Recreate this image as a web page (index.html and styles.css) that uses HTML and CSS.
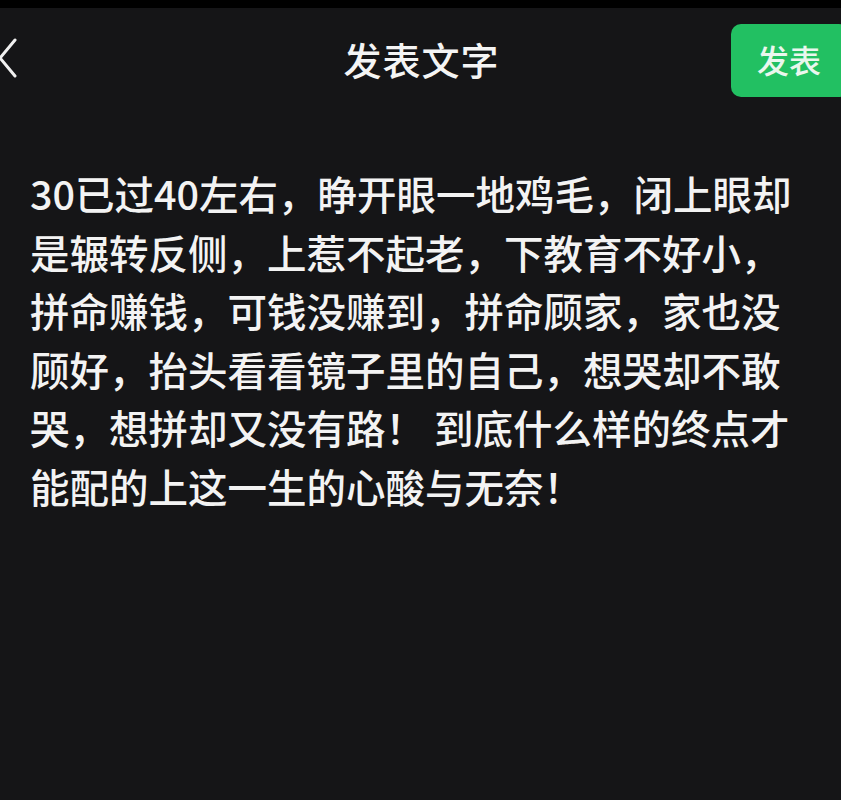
FILE: index.html
```html
<!DOCTYPE html>
<html lang="zh-CN">
<head>
  <meta charset="UTF-8">
  <meta name="viewport" content="width=device-width, initial-scale=1">
  <title>发表文字</title>
  <link rel="stylesheet" href="styles.css">
</head>
<body>
  <div class="status-strip"></div>

  <header class="header">
    <div class="back">
      <svg width="14" height="40" viewBox="-4 0 14 40" aria-hidden="true">
        <polyline points="11,2 -4,20 11,38" fill="none" stroke="#f0f0f0" stroke-width="3" stroke-linecap="round" stroke-linejoin="round"/>
      </svg>
    </div>
    <h1 class="title">发表文字</h1>
    <div class="actions">
      <button class="btn-publish">发表</button>
    </div>
  </header>

  <main class="content">
    <p class="post-text">30已过40左右，睁开眼一地鸡毛，闭上眼却是辗转反侧，上惹不起老，下教育不好小，拼命赚钱，可钱没赚到，拼命顾家，家也没顾好，抬头看看镜子里的自己，想哭却不敢哭，想拼却又没有路！ 到底什么样的终点才能配的上这一生的心酸与无奈！</p>
  </main>
</body>
</html>
```

FILE: styles.css
```css
html, body {
  margin: 0;
  padding: 0;
}

body {
  font-family: "Noto Sans CJK SC", "Noto Sans", sans-serif;
  background: #151517;
  color: #f2f2f2;
  min-height: 800px;
  overflow: hidden;
}

.status-strip {
  height: 8px;
  background: #000;
}

.header {
  display: grid;
  grid-template-columns: 1fr auto 1fr;
  align-items: center;
  height: 100px;
}

.back {
  display: flex;
  align-items: center;
}

.back svg {
  display: block;
  overflow: visible;
}

.title {
  margin: 0;
  font-size: 38px;
  font-weight: 500;
  letter-spacing: 1px;
  color: #f4f4f4;
  padding-left: 2px;
}

.actions {
  display: flex;
  justify-content: flex-end;
  overflow: hidden;
}

.btn-publish {
  width: 118px;
  height: 73px;
  margin: 5px -8px 0 0;
  padding: 0 0 4px 26px;
  border: none;
  border-radius: 10px;
  background: #22c062;
  color: #eaf7ee;
  font-family: inherit;
  font-size: 32px;
  font-weight: 500;
  text-align: left;
  cursor: pointer;
}

.content {
  padding: 56px 41px 0 30px;
}

.post-text {
  margin: 0;
  font-size: 39.5px;
  line-height: 58.5px;
  font-weight: 500;
  color: #f3f3f3;
}
```
